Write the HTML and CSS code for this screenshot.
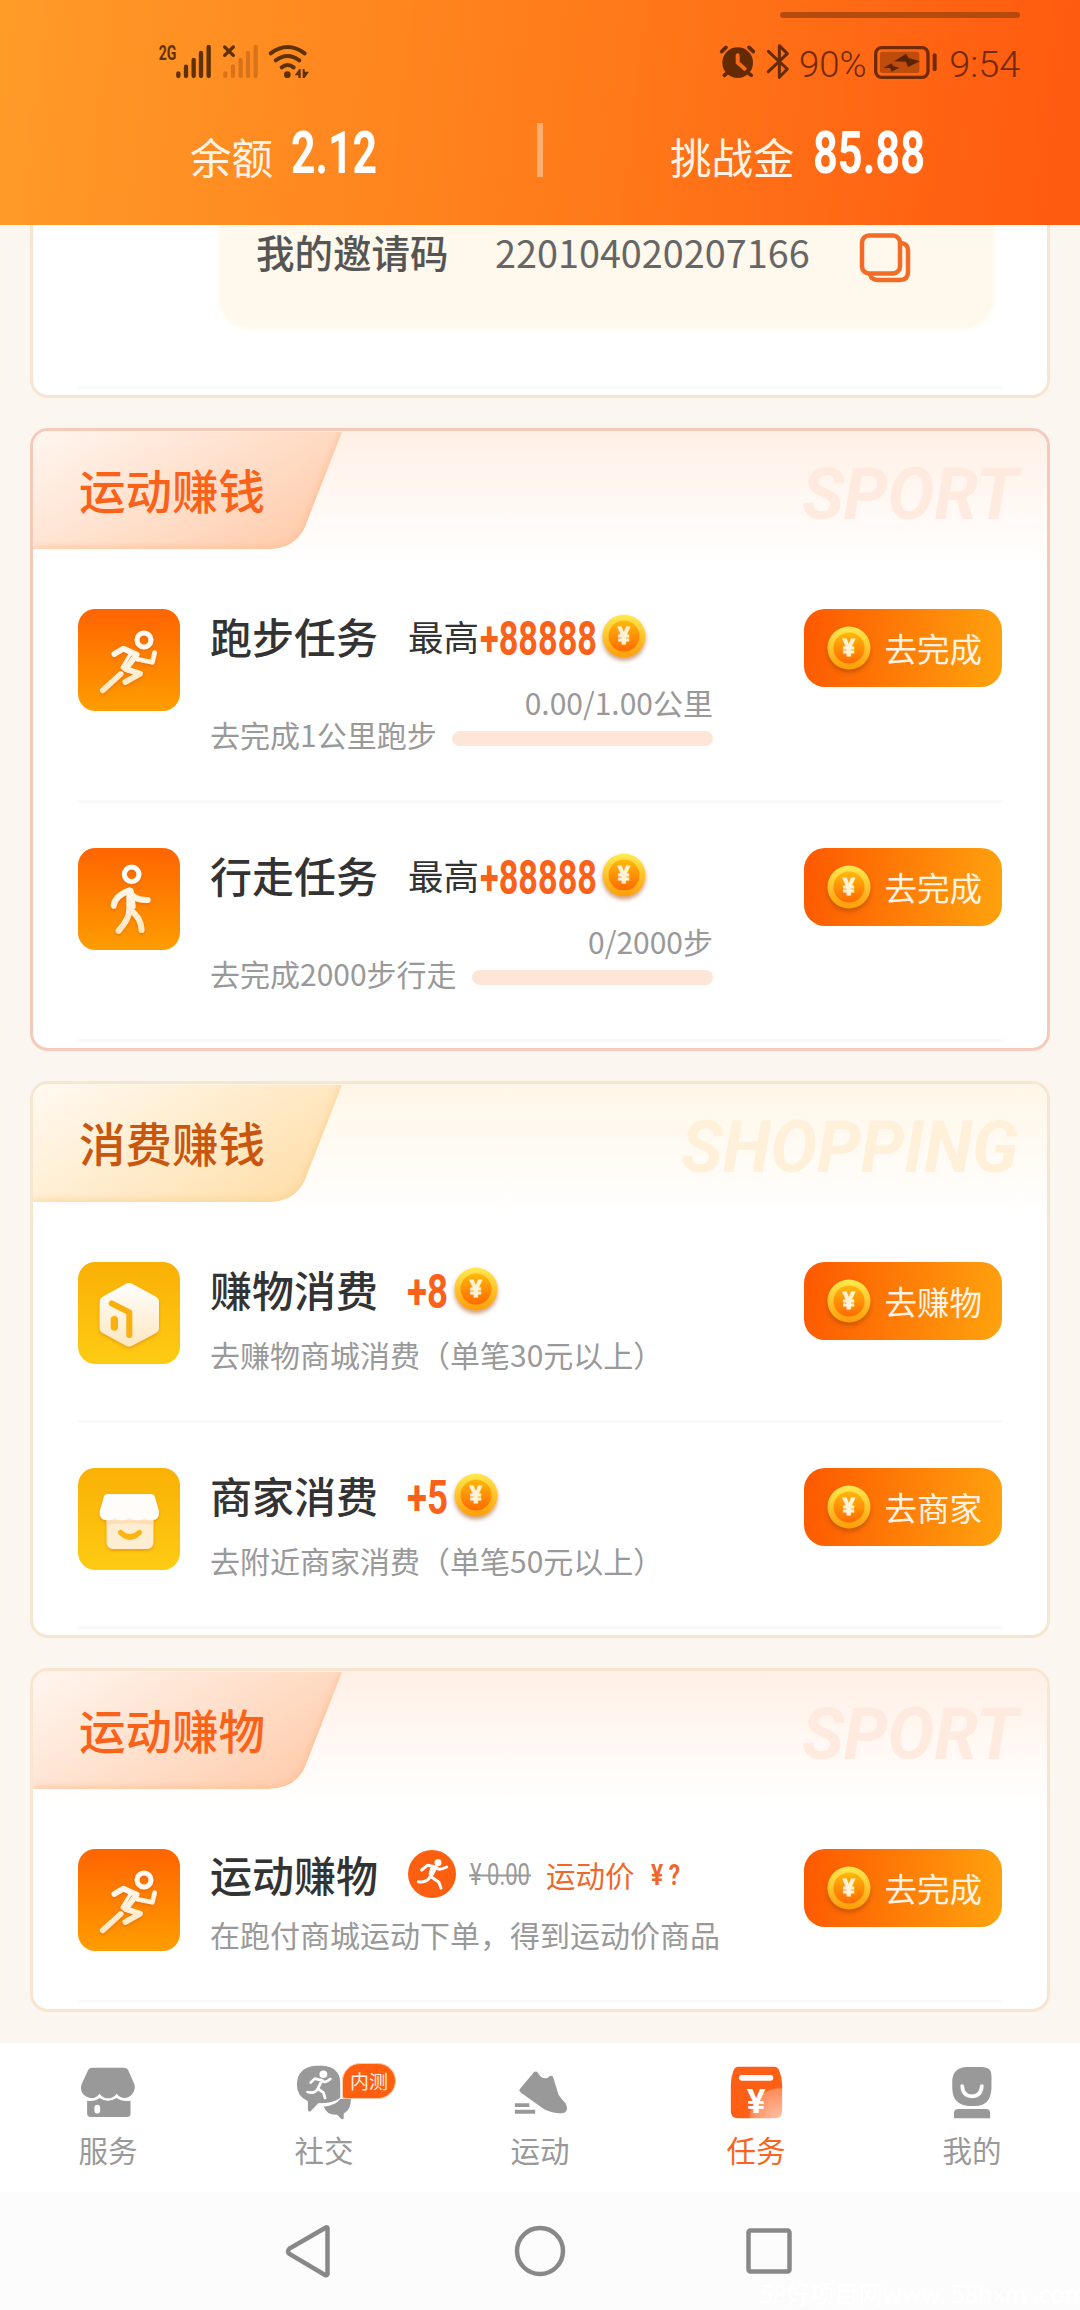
FILE: index.html
```html
<!DOCTYPE html>
<html lang="zh-CN">
<head>
<meta charset="utf-8">
<title>任务</title>
<link rel="stylesheet" href="styles.css">
</head>
<body>
<svg class="defs" width="0" height="0" aria-hidden="true">
  <defs>
    <linearGradient id="coinRim" x1="0" y1="0" x2="0" y2="1"><stop offset="0" stop-color="#ffea50"/><stop offset="1" stop-color="#ff9d08"/></linearGradient>
    <linearGradient id="coinCore" x1="0" y1="0" x2="0" y2="1"><stop offset="0" stop-color="#ffb90b"/><stop offset="1" stop-color="#ff6a00"/></linearGradient>
    <linearGradient id="tileOrange" x1="0" y1="0" x2="0" y2="1"><stop offset="0" stop-color="#ff6400"/><stop offset="1" stop-color="#ff9d00"/></linearGradient>
    <linearGradient id="tileYellow" x1="0" y1="0" x2="0" y2="1"><stop offset="0" stop-color="#fab005"/><stop offset="1" stop-color="#fecb14"/></linearGradient>
    <linearGradient id="cream" gradientUnits="userSpaceOnUse" x1="0" y1="60" x2="0" y2="255"><stop offset="0" stop-color="#fff"/><stop offset="1" stop-color="#ffe6c0"/></linearGradient>
    <linearGradient id="tabPeach" x1="0" y1="0" x2="1" y2=".6"><stop offset="0" stop-color="#fff6f0"/><stop offset="1" stop-color="#ffcfb0"/></linearGradient>
    <linearGradient id="tabCream" x1="0" y1="0" x2="1" y2=".6"><stop offset="0" stop-color="#fffaf2"/><stop offset="1" stop-color="#ffe0ae"/></linearGradient>
    <filter id="drop" x="-30%" y="-30%" width="160%" height="170%"><feDropShadow dx="0" dy="5" stdDeviation="5" flood-color="#c84a00" flood-opacity=".35"/></filter>
    <filter id="coinShadow" x="-30%" y="-30%" width="160%" height="170%"><feDropShadow dx="0" dy="3" stdDeviation="2.2" flood-color="#963c00" flood-opacity=".5"/></filter>
    <filter id="soft"><feGaussianBlur stdDeviation="3"/></filter>
    <clipPath id="tabClip"><path d="M0 0H309L272 95Q262 117 235 117H0Z"/></clipPath>
    <symbol id="coin" viewBox="0 0 54 54">
      <circle cx="27" cy="26" r="21.5" fill="url(#coinRim)" filter="url(#coinShadow)"/>
      <circle cx="27" cy="26" r="15.5" fill="url(#coinCore)"/>
      <text x="27" y="34" text-anchor="middle" class="coin-sign">¥</text>
    </symbol>
    <symbol id="runner" viewBox="0 0 306 306">
      <rect width="306" height="306" rx="52" fill="url(#tileOrange)"/>
      <g fill="none" stroke="url(#cream)" stroke-width="17" stroke-linecap="round" stroke-linejoin="round" filter="url(#drop)">
        <circle cx="198" cy="93" r="21" stroke-width="15"/>
        <path d="M109 135L136 119L176 137L143 180L186 194L142 219"/>
        <path d="M158 133L132 176L152 187" stroke-width="10"/>
        <path d="M178 151L223 160L230 131" stroke-width="14"/>
        <path d="M128 195L74 244"/>
      </g>
    </symbol>
    <symbol id="walker" viewBox="0 0 306 306">
      <rect width="306" height="306" rx="52" fill="url(#tileOrange)"/>
      <g fill="none" stroke="url(#cream)" stroke-width="18" stroke-linecap="round" stroke-linejoin="round" filter="url(#drop)">
        <circle cx="161" cy="79" r="22" stroke-width="15"/>
        <path d="M107 173Q110 144 154 128Q166 158 209 156"/>
        <path d="M154 128V186Q154 212 122 248" />
        <path d="M154 184Q188 206 191 246"/>
        <path d="M156 130L162 175" stroke-width="22"/>
      </g>
    </symbol>
    <symbol id="parcel" viewBox="0 0 306 306">
      <rect width="306" height="306" rx="52" fill="url(#tileYellow)"/>
      <path d="M141 67Q153 59 165 67L234 104Q243 109 243 120V198Q243 208 234 213L165 250Q153 257 141 250L74 213Q65 208 65 198V120Q65 109 74 104Z" fill="url(#cream)" filter="url(#drop)"/>
      <path d="M101 124L154 151V219" fill="none" stroke="#fab00c" stroke-width="18" stroke-linecap="round" stroke-linejoin="round"/>
      <rect x="98" y="162" width="22" height="44" rx="11" fill="#fab00c"/>
    </symbol>
    <symbol id="shop" viewBox="0 0 306 306">
      <rect width="306" height="306" rx="52" fill="url(#tileYellow)"/>
      <g filter="url(#drop)">
      <path d="M86 145H226V223Q226 243 206 243H106Q86 243 86 223Z" fill="#ffedd2"/>
      <path d="M86 157H226V170Q156 160 86 170Z" fill="#ffdcb4"/>
      <path d="M90 78H218Q228 78 231 88L243 130Q245 156 222 157Q208 157 200 150Q190 157 177 157Q163 157 154 150Q146 157 132 157Q118 157 110 150Q100 157 87 157Q62 155 65 130L77 88Q80 78 90 78Z" fill="#fffdf9"/>
      </g>
      <path d="M128 194Q156 221 184 194" fill="none" stroke="#fab512" stroke-width="16" stroke-linecap="round"/>
    </symbol>
    <symbol id="stride" viewBox="0 0 144 144">
      <circle cx="90" cy="38" r="10"/>
      <path d="M41 60L58 46L84 51L69 80L92 96L99 114M84 51Q91 64 116 51M68 78Q56 100 31 95" fill="none" stroke-width="9" stroke-linecap="round" stroke-linejoin="round"/>
      <path d="M68 52L85 58L74 79L62 73Z"/>
    </symbol>
  </defs>
</svg>

<header class="top">
  <div class="status">
    <svg width="240" height="100" viewBox="0 0 720 300">
      <text x="56" y="179" class="net" textLength="53" lengthAdjust="spacingAndGlyphs">2G</text>
      <g stroke="#5f3100" stroke-width="13" stroke-linecap="round"><path d="M115 220V228M138 200V228M161 180V228M183 159V228M206 141V228"/></g>
      <g stroke="#d97319" stroke-width="13" stroke-linecap="round"><path d="M256 220V228M279 200V228M302 180V228M324 159V228M347 141V228"/></g>
      <path d="M254 141L280 166M280 141L254 166" stroke="#5f3100" stroke-width="10" stroke-linecap="round"/>
      <g fill="none" stroke="#5f3100" stroke-width="12" stroke-linecap="round"><path d="M392 160Q443 122 494 160M407 181Q443 155 478 181M425 202Q443 188 461 202"/></g>
      <circle cx="442" cy="224" r="10" fill="#5f3100"/>
      <path d="M482 207V234H475V226H464L478 207ZM488 207H494V215H507L494 234H488Z" fill="#5f3100"/>
    </svg>
    <svg width="340" height="100" viewBox="0 0 1020 300">
      <path d="M249 45H951" stroke="#b54a0e" stroke-width="18" stroke-linecap="round"/>
      <g stroke="#632a04" fill="none" stroke-linecap="round">
        <circle cx="113" cy="188" r="46" fill="#632a04" stroke="none"/>
        <path d="M65 155L78 142M147 142L160 155M73 226L84 216M141 216L154 226" stroke-width="11"/>
        <path d="M113 166V188L134 206" stroke="#f96a17" stroke-width="12"/>
        <path d="M205 154L262 207L238 232V137L262 161L205 215" stroke-width="9" stroke-linejoin="round"/>
      </g>
      <text x="297" y="230" class="clock" textLength="203" lengthAdjust="spacingAndGlyphs">90%</text>
      <rect x="527" y="143" width="157" height="89" rx="18" fill="none" stroke="#702a04" stroke-width="10"/>
      <rect x="540" y="155" width="118" height="64" rx="8" fill="#bd4c0d"/>
      <path d="M704 166V208" stroke="#702a04" stroke-width="12" stroke-linecap="round"/>
      <path d="M582 184L618 161L626 174L660 184L624 201L618 185ZM551 204L574 190L580 199L598 203L574 215L571 204Z" fill="#5c2404"/>
      <text x="748" y="230" class="clock" textLength="213" lengthAdjust="spacingAndGlyphs">9:54</text>
    </svg>
  </div>
  <div class="funds">
    <div class="fund fund-left"><span>余额</span><svg class="amount" width="84" height="60"><text x="-1" y="50" textLength="86" lengthAdjust="spacingAndGlyphs">2.12</text></svg></div>
    <i class="fund-line"></i>
    <div class="fund fund-right"><span>挑战金</span><svg class="amount" width="109" height="60"><text x="-1" y="50" textLength="112" lengthAdjust="spacingAndGlyphs">85.88</text></svg></div>
  </div>
</header>

<main class="feed">
  <section class="card invite">
    <div class="invite-box">
      <span class="invite-label">我的邀请码</span><span class="invite-code">220104020207166</span>
      <svg class="copy" width="52" height="50" viewBox="0 0 52 50" fill="none" stroke="#f26c26" stroke-width="4.500"><rect x="3" y="2.500" width="38" height="38" rx="7"/><path d="M11 41Q12 47 19 47H41Q49 47 49 39V17Q49 11 42 10"/></svg>
    </div>
    <div class="rule"></div>
  </section>

  <section class="card card-strong">
    <div class="head">
      <svg class="tab" width="312" height="120"><g clip-path="url(#tabClip)"><path d="M0 0H309L272 95Q262 117 235 117H0Z" fill="url(#tabPeach)"/><path d="M310 0L272 95Q262 117 235 117H0" fill="none" stroke="#ffb88c" stroke-width="5" opacity=".7" filter="url(#soft)"/></g></svg>
      <h2>运动赚钱</h2>
      <svg class="mark" width="222" height="70"><text x="1" y="58" textLength="216" lengthAdjust="spacingAndGlyphs">SPORT</text></svg>
    </div>
    <div class="task">
      <svg class="tile"><use href="#runner"/></svg>
      <div class="info">
        <div class="line"><h3>跑步任务</h3><span class="most">最高</span><svg class="bonus" width="117" height="58"><text x="1" y="48" textLength="117" lengthAdjust="spacingAndGlyphs">+88888</text></svg><svg class="coin"><use href="#coin"/></svg></div>
        <div class="progress"><p>去完成1公里跑步</p><div class="meter"><span>0.00/1.00公里</span><i></i></div></div>
      </div>
      <button class="go"><svg class="coin"><use href="#coin"/></svg><span>去完成</span></button>
    </div>
    <div class="task">
      <svg class="tile"><use href="#walker"/></svg>
      <div class="info">
        <div class="line"><h3>行走任务</h3><span class="most">最高</span><svg class="bonus" width="117" height="58"><text x="1" y="48" textLength="117" lengthAdjust="spacingAndGlyphs">+88888</text></svg><svg class="coin"><use href="#coin"/></svg></div>
        <div class="progress"><p>去完成2000步行走</p><div class="meter"><span>0/2000步</span><i></i></div></div>
      </div>
      <button class="go"><svg class="coin"><use href="#coin"/></svg><span>去完成</span></button>
    </div>
  </section>

  <section class="card card-shop">
    <div class="head">
      <svg class="tab" width="312" height="120"><g clip-path="url(#tabClip)"><path d="M0 0H309L272 95Q262 117 235 117H0Z" fill="url(#tabCream)"/><path d="M310 0L272 95Q262 117 235 117H0" fill="none" stroke="#f8cd8c" stroke-width="5" opacity=".7" filter="url(#soft)"/></g></svg>
      <h2>消费赚钱</h2>
      <svg class="mark" width="342" height="70"><text x="0" y="58" textLength="337" lengthAdjust="spacingAndGlyphs">SHOPPING</text></svg>
    </div>
    <div class="task short">
      <svg class="tile"><use href="#parcel"/></svg>
      <div class="info">
        <div class="line"><h3>赚物消费</h3><svg class="bonus" width="40" height="58"><text x="-1" y="48" textLength="41" lengthAdjust="spacingAndGlyphs">+8</text></svg><svg class="coin"><use href="#coin"/></svg></div>
        <p class="desc">去赚物商城消费（单笔30元以上）</p>
      </div>
      <button class="go"><svg class="coin"><use href="#coin"/></svg><span>去赚物</span></button>
    </div>
    <div class="task short">
      <svg class="tile"><use href="#shop"/></svg>
      <div class="info">
        <div class="line"><h3>商家消费</h3><svg class="bonus" width="40" height="58"><text x="-1" y="48" textLength="41" lengthAdjust="spacingAndGlyphs">+5</text></svg><svg class="coin"><use href="#coin"/></svg></div>
        <p class="desc">去附近商家消费（单笔50元以上）</p>
      </div>
      <button class="go"><svg class="coin"><use href="#coin"/></svg><span>去商家</span></button>
    </div>
  </section>

  <section class="card">
    <div class="head">
      <svg class="tab" width="312" height="120"><g clip-path="url(#tabClip)"><path d="M0 0H309L272 95Q262 117 235 117H0Z" fill="url(#tabPeach)"/><path d="M310 0L272 95Q262 117 235 117H0" fill="none" stroke="#ffb88c" stroke-width="5" opacity=".7" filter="url(#soft)"/></g></svg>
      <h2>运动赚物</h2>
      <svg class="mark" width="222" height="70"><text x="1" y="58" textLength="216" lengthAdjust="spacingAndGlyphs">SPORT</text></svg>
    </div>
    <div class="task deal">
      <svg class="tile"><use href="#runner"/></svg>
      <div class="info">
        <div class="line"><h3>运动赚物</h3><svg class="round" width="48" height="48" viewBox="0 0 144 144"><circle cx="72" cy="72" r="72" fill="#fd5f10"/><use href="#stride" fill="#fff" stroke="#fff"/></svg><svg class="was" width="62" height="40"><text x="1" y="31" textLength="60" lengthAdjust="spacingAndGlyphs">¥ 0.00</text><path d="M0 21.500H62" stroke="#999" stroke-width="2"/></svg><span class="label">运动价</span><svg class="ask" width="34" height="40"><text x="1" y="31" textLength="29" lengthAdjust="spacingAndGlyphs">¥ ?</text></svg></div>
        <p class="desc">在跑付商城运动下单，得到运动价商品</p>
      </div>
      <button class="go"><svg class="coin"><use href="#coin"/></svg><span>去完成</span></button>
    </div>
  </section>
</main>

<nav class="tabs">
  <a><svg viewBox="226.5 97 174.2 180" preserveAspectRatio="none"><path d="M268 114H360Q368 114 372 121L391 166Q394 186 378 199Q373 204 363 205Q350 206 339 192Q328 206 313 206Q300 206 289 192Q278 207 263 205Q252 204 245 197Q232 184 236 166L256 121Q259 114 268 114Z"/><path fill-rule="evenodd" d="M253 213Q276 216 289 205Q312 222 339 205Q352 216 379 213V252Q379 262 368 262H264Q253 262 253 252ZM274 235V242Q274 252 282 252Q291 252 291 242V235Q291 225 282 225Q274 225 274 235Z"/></svg><span>服务</span></a>
  <a class="social"><svg viewBox="853.7 97 174.2 180" preserveAspectRatio="none"><path d="M917 108H936Q988 112 988 160V204Q970 221 924 221L902 245Q895 248 894 240V215Q862 200 862 164Q864 112 917 108Z"/><path d="M940 231Q975 227 988 208L1019 207Q1019 240 998 252V265Q997 271 991 268L979 255Q950 258 940 231Z"/><g fill="#fff" stroke="#fff" stroke-width="9" stroke-linecap="round" stroke-linejoin="round"><circle cx="939" cy="134" r="7"/><path d="M902 159L914 147L935 152L923 177L939 189L944 205M935 152Q942 163 959 148M923 177Q914 194 893 187" fill="none" stroke-width="8"/></g></svg><em>内测</em><span>社交</span></a>
  <a><svg viewBox="1480.900 97 174.2 180" preserveAspectRatio="none"><path d="M1549 129Q1556 122 1562 129Q1572 150 1590 145Q1600 133 1606 142L1622 195Q1629 207 1641 219Q1653 240 1639 249Q1615 255 1580 239L1511 188Q1506 184 1509 179Z"/><path d="M1495 221H1537V232H1495ZM1495 240H1554V252H1495Z"/></svg><span>运动</span></a>
  <a class="on"><svg viewBox="540 97 174.2 180" preserveAspectRatio="none"><defs><radialGradient id="glow" cx=".95" cy="1" r=".75"><stop offset="0" stop-color="#ffc0a4"/><stop offset=".75" stop-color="#fe8d5b"/><stop offset=".8" stop-color="#fd5f14"/></radialGradient></defs><path d="M576 111H680Q690 111 694 122Q703 143 703 165V245Q703 266 683 266H575Q554 266 554 245V165Q554 143 562 122Q566 111 576 111Z" fill="url(#glow)"/><rect x="578" y="136" width="99" height="17" rx="7" fill="#fff"/><text x="600" y="249" textLength="55" lengthAdjust="spacingAndGlyphs" class="bag-sign">¥</text></svg><span>任务</span></a>
  <a><svg viewBox="1167.300 97 174.2 180" preserveAspectRatio="none"><path d="M1237 112H1285Q1311 113 1311 138V175Q1309 229 1262 229H1246Q1198 226 1197 175V153Q1199 115 1237 112Z"/><path d="M1226 169Q1228 200 1254 200Q1280 200 1283 169" fill="none" stroke="#fff" stroke-width="11" stroke-linecap="round"/><path d="M1215 238H1295Q1307 238 1307 250V266H1202V250Q1202 238 1215 238Z"/></svg><span>我的</span></a>
</nav>

<footer class="system">
  <svg width="60" height="60" viewBox="0 0 60 60"><path d="M47.500 7V53Q47 55 45 54L9.500 33Q6.500 30.500 9.500 27.500L45 7Q47 5.500 47.500 7Z"/></svg>
  <svg width="60" height="60" viewBox="0 0 60 60"><circle cx="30" cy="30" r="23"/></svg>
  <svg width="60" height="60" viewBox="0 0 60 60"><rect x="8.500" y="9.500" width="41" height="41" rx="2"/></svg>
  <span class="site">58好项目网www. 58hxm .com</span>
</footer>
</body>
</html>
```
FILE: styles.css
```css
* { box-sizing: border-box; margin: 0; padding: 0; }

body {
  width: 1080px;
  height: 2310px;
  overflow: hidden;
  display: flex;
  flex-direction: column;
  background: #fbf7f0;
  color: #333;
  font-family: "Noto Sans CJK SC", "Noto Sans", sans-serif;
}

svg { flex: none; display: block; overflow: visible; }
.defs { position: absolute; }
i, em { font-style: normal; }

.top {
  flex: none;
  height: 225px;
  background: linear-gradient(97deg, #ff9b28 0%, #ff7a1a 55%, #ff5b10 97%);
}
.status { display: flex; height: 100px; padding: 0 40px 0 140px; justify-content: space-between; }
.net { font: bold 60px Roboto, sans-serif; fill: #5f3100; }
.clock { font: 300 109px Roboto, sans-serif; fill: #702a04; }

.funds { display: flex; align-items: flex-start; height: 125px; }
.fund { display: flex; align-items: center; height: 60px; margin-top: 23px; color: #fff3e6; font-size: 41.500px; line-height: 60px; }
.fund-left { width: 537px; padding-left: 190px; gap: 19px; }
.fund-right { padding-left: 127px; gap: 19px; }
.fund span { padding-top: 6px; }
.fund-line { width: 6px; height: 54px; margin-top: 23px; background: rgba(255, 255, 255, .38); }
.amount text { font: bold 60px Roboto, sans-serif; fill: #fff; }

.feed { flex: none; height: 1818px; padding: 0 30px; display: flex; flex-direction: column; gap: 30px; }
.card { background: #fff; border: 3px solid #f8e5d0; border-radius: 18px; overflow: hidden; padding-bottom: 6px; }
.card-strong { border-color: #f5cabb; }
.card-shop { border-color: #f5e6cf; }

.invite { height: 173px; border-top: 0; border-radius: 0 0 18px 18px; display: flex; flex-direction: column; justify-content: space-between; }
.invite-box {
  display: flex;
  height: 102px;
  margin: 0 54px 0 187px;
  padding-left: 36px;
  border-radius: 0 0 30px 30px;
  background: #fff8ec;
  box-shadow: 0 1px 6px #fff5e4;
  line-height: 52px;
}
.invite-label { width: 239px; font-size: 38.500px; font-weight: 500; color: #555; }
.invite-code { width: 364px; padding-top: 1px; font-size: 37.800px; color: #666; }
.copy { margin-top: 8px; }
.rule { height: 3px; margin: 0 45px; background: #f9fafa; }

.head {
  position: relative;
  display: flex;
  justify-content: space-between;
  height: 133px;
  padding: 23px 24px 0 46px;
  background: linear-gradient(#fff0e6, #fff 100%);
}
.card-shop .head { background: linear-gradient(#fff6e8, #fff 100%); }
.tab { position: absolute; left: 0; top: 1px; }
.head h2 { position: relative; font-size: 46.500px; line-height: 70px; font-weight: 500; color: #fb6219; }
.card-shop h2 { color: #c9560d; }
.mark { margin-top: 7px; }
.mark text { font: italic bold 72px Roboto, sans-serif; fill: #feeadf; }
.card-shop .mark text { fill: #fff0da; }

.task {
  display: flex;
  height: 239px;
  margin: 0 45px;
  padding-top: 45px;
  border-bottom: 3px solid #f9f9fa;
}
.short { height: 206px; }
.deal { height: 199px; }
.tile { width: 102px; height: 102px; margin-right: 30px; }
.info { width: 594px; margin-top: -2px; }
.line { display: flex; align-items: center; height: 58px; }
h3 { width: 168px; margin-right: 30px; font-size: 42px; line-height: 58px; font-weight: 500; white-space: nowrap; }
.most { flex: none; width: 71px; font-size: 35.500px; line-height: 58px; white-space: nowrap; }
.bonus text { font: bold 49px Roboto, sans-serif; fill: #fa611b; }
.coin { width: 54px; height: 54px; }
.line .coin { margin: 1px 0 0 1px; }
.coin-sign { font: bold 23px Roboto, sans-serif; fill: #fff3d8; stroke: #fff3d8; stroke-width: .8px; }
.desc { margin-top: 16px; font-size: 30px; line-height: 40px; color: #999; white-space: nowrap; }
.progress { display: flex; align-items: flex-end; width: 503px; height: 89px; gap: 15px; color: #999; font-size: 30px; line-height: 40px; white-space: nowrap; }
.progress p { flex: none; }
.meter { flex: 1; display: flex; flex-direction: column; align-items: flex-end; padding-bottom: 8px; }
.meter span { font-size: 30px; }
.meter i { width: 100%; height: 15px; margin-top: 9px; border-radius: 8px; background: #fde6d8; }

.deal .info { margin-top: -4px; }
.deal .desc { margin-top: 11px; }
.round { margin-right: 13px; }
.was text { font: 400 31px Roboto, sans-serif; fill: #999; }
.label { width: 89px; margin: 0 15px; font-size: 29.500px; line-height: 40px; color: #ee682b; white-space: nowrap; }
.ask text { font: bold 30px Roboto, sans-serif; fill: #ee682b; }

.go {
  display: flex;
  align-items: center;
  width: 198px;
  height: 78px;
  padding: 2px 0 0 17.500px;
  border: 0;
  border-radius: 21px;
  background: linear-gradient(97deg, #fd5800, #ffa30e);
  color: #fff3e4;
  font: 400 32.500px/48px "Noto Sans CJK SC", sans-serif;
  white-space: nowrap;
}
.go .coin { margin-right: 9px; }
.go span { margin-top: -3px; }

.tabs { flex: none; display: flex; height: 149px; background: #fff; }
.tabs a { position: relative; width: 216px; padding-top: 19px; display: flex; flex-direction: column; align-items: center; font-size: 29.500px; line-height: 40px; color: #999; }
.tabs svg { width: 60px; height: 60px; fill: #999; }
.tabs span { margin-top: 7px; }
.tabs .on { color: #fa6420; }
.bag-sign { font: bold 102px Roboto, sans-serif; fill: #fff; }
.social em {
  position: absolute;
  left: 126px;
  top: 20px;
  width: 54px;
  height: 36px;
  border: 1px solid #ffc7aa;
  border-radius: 18px 18px 18px 3px;
  background: #ff5f0f;
  color: #fff0e6;
  font-size: 19px;
  line-height: 34px;
  text-align: center;
}

.system { flex: none; position: relative; height: 118px; padding-top: 29px; display: flex; justify-content: center; gap: 170px; background: #fcfcfc; }
.system svg { fill: none; stroke: #888; stroke-width: 4.500px; }
.site { position: absolute; left: 760px; bottom: 0; width: 320px; font-size: 24px; line-height: 34px; color: #fff; white-space: nowrap; }
```
